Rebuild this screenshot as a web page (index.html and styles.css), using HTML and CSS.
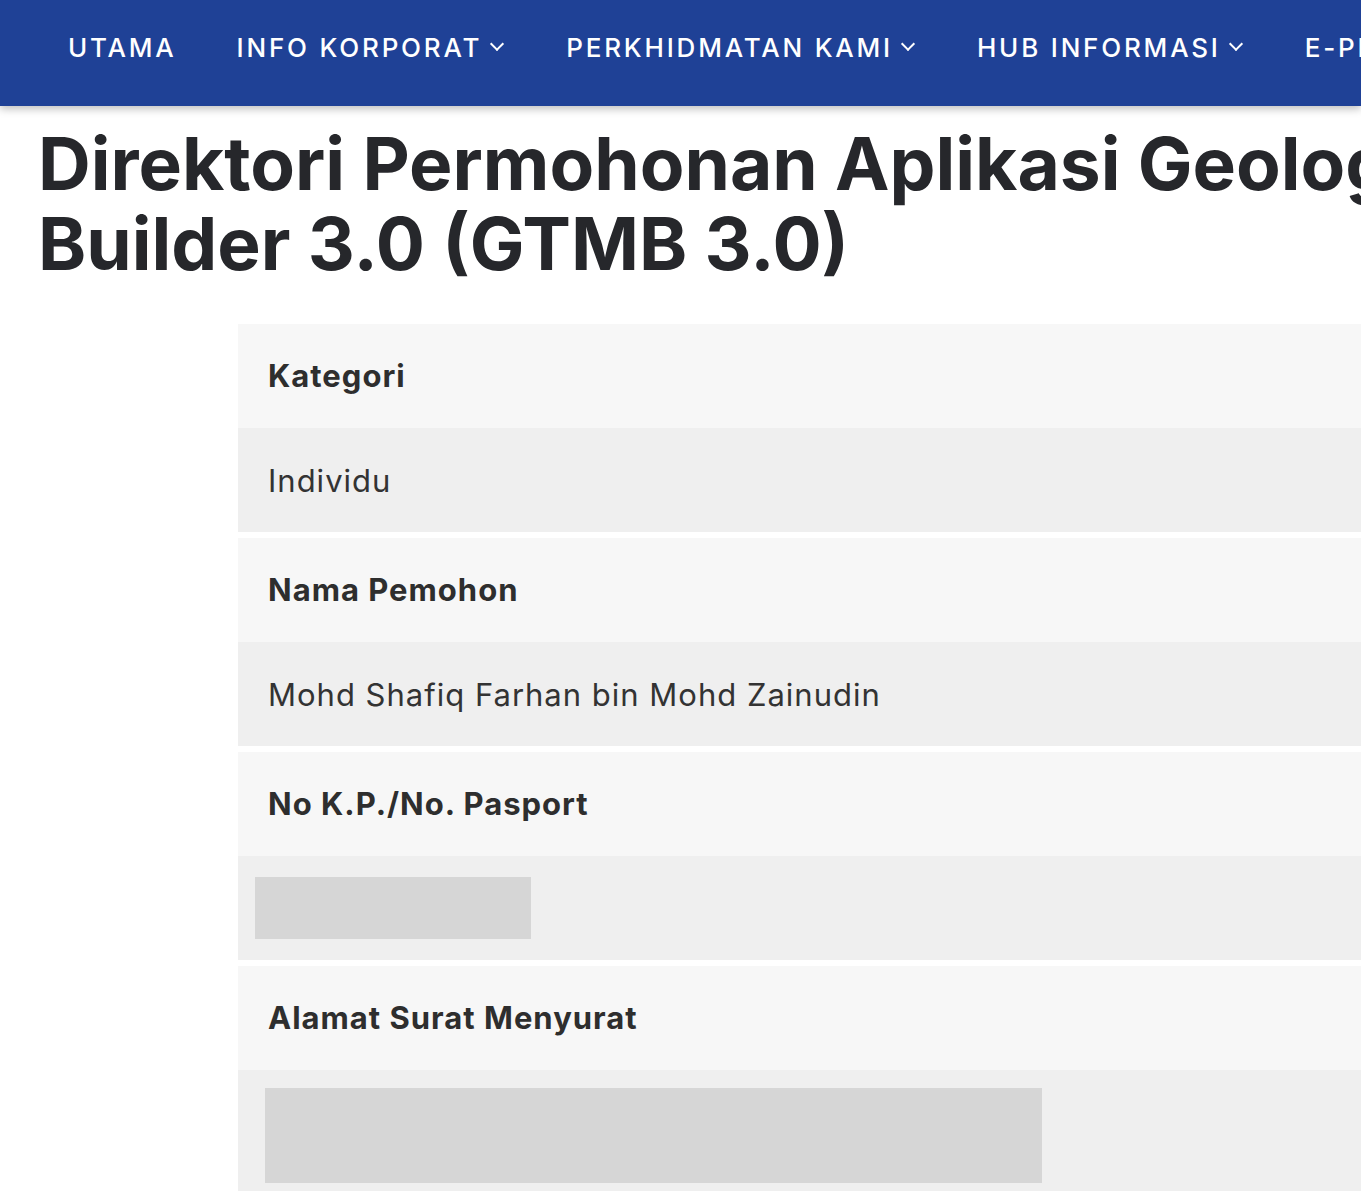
FILE: index.html
```html
<!DOCTYPE html>
<html lang="ms">
<head>
  <meta charset="UTF-8">
  <meta name="viewport" content="width=device-width, initial-scale=1.0">
  <title>Direktori Permohonan Aplikasi Geologi</title>
  <link rel="stylesheet" href="styles.css">
</head>
<body>
  <nav class="topnav">
    <a href="#" class="nav-item">UTAMA</a>
    <a href="#" class="nav-item">INFO KORPORAT <span class="chev"></span></a>
    <a href="#" class="nav-item">PERKHIDMATAN KAMI <span class="chev"></span></a>
    <a href="#" class="nav-item">HUB INFORMASI <span class="chev"></span></a>
    <a href="#" class="nav-item">E-PERKHIDMATAN <span class="chev"></span></a>
  </nav>

  <h1 class="page-title">Direktori Permohonan Aplikasi Geologi Terrain Mapping<br>Builder 3.0 (GTMB 3.0)</h1>

  <div class="detail-list">
    <div class="field">
      <div class="field-label">Kategori</div>
      <div class="field-value">Individu</div>
    </div>
    <div class="field">
      <div class="field-label">Nama Pemohon</div>
      <div class="field-value">Mohd Shafiq Farhan bin Mohd Zainudin</div>
    </div>
    <div class="field">
      <div class="field-label">No K.P./No. Pasport</div>
      <div class="field-value masked"><div class="redact redact-ic"></div></div>
    </div>
    <div class="field">
      <div class="field-label">Alamat Surat Menyurat</div>
      <div class="field-value masked tall"><div class="redact redact-addr"></div></div>
    </div>
  </div>
</body>
</html>
```

FILE: styles.css
```css
body {
  margin: 0;
  font-family: Inter, 'Noto Sans', sans-serif;
  background: #fff;
  color: #333;
  overflow: hidden;
}
.topnav {
  background: #1f4196;
  height: 94px;
  padding: 0 0 12px 68px;
  display: flex;
  align-items: center;
  gap: 60px;
  white-space: nowrap;
  box-shadow: 0 3px 8px rgba(0,0,0,0.25);
  position: relative;
}
.nav-item {
  color: #fff;
  text-decoration: none;
  font-size: 26px;
  font-weight: 500;
  letter-spacing: 2.8px;
  display: flex;
  align-items: center;
  gap: 6px;
}
.chev {
  width: 8px;
  height: 8px;
  border-right: 2px solid #fff;
  border-bottom: 2px solid #fff;
  transform: rotate(45deg);
  margin: -6px 4px 0 4px;
}
.page-title {
  font-size: 73px;
  font-weight: 700;
  line-height: 80px;
  color: #26272b;
  margin: 18px 0 40px 38px;
  white-space: nowrap;
}
.detail-list {
  margin-left: 238px;
  display: flex;
  flex-direction: column;
  gap: 6px;
}
.field-label,
.field-value {
  height: 104px;
  display: flex;
  align-items: center;
  padding-left: 30px;
  font-size: 31px;
  letter-spacing: 1px;
}
.field-label {
  background: #f7f7f7;
  font-weight: 700;
  color: #2e2e2e;
  padding-bottom: 2px;
  height: 102px;
}
.field-value {
  background: #efefef;
  color: #333;
}
.field-value.masked {
  padding-left: 17px;
}
.field-value.tall {
  height: 140px;
  align-items: flex-start;
}
.redact {
  background: #d6d6d6;
}
.redact-ic {
  width: 276px;
  height: 62px;
}
.redact-addr {
  width: 777px;
  height: 95px;
  margin: 18px 0 0 10px;
}
```
